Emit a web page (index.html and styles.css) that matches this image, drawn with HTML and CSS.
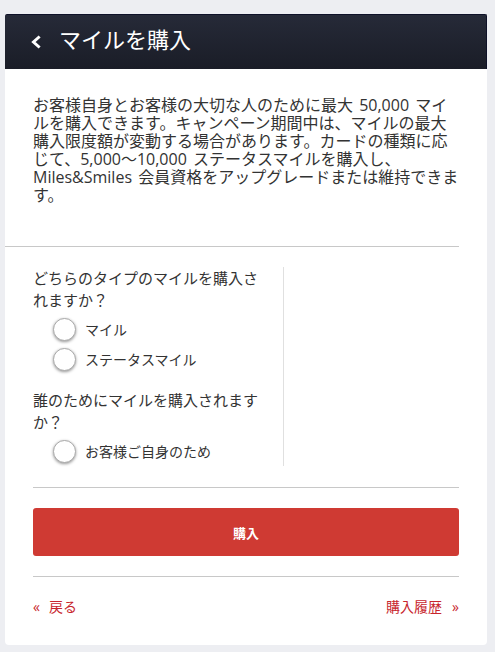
FILE: index.html
```html
<!DOCTYPE html>
<html lang="ja">
<head>
<meta charset="utf-8">
<title>マイルを購入</title>
<link rel="stylesheet" href="styles.css">
</head>
<body>
<div class="card">
  <header class="head">
    <svg class="chev" width="12" height="14" viewBox="0 0 12 14"><polyline points="8.5,2.5 3.5,7 8.5,11.5" fill="none" stroke="#fff" stroke-width="3" stroke-linecap="square" stroke-linejoin="miter"/></svg>
    <h1 class="title">マイルを購入</h1>
  </header>
  <div class="intro">
    <p class="intro-text">お客様自身とお客様の大切な人のために最大 50,000 マイルを購入できます。キャンペーン期間中は、マイルの最大購入限度額が変動する場合があります。カードの種類に応じて、5,000～10,000 ステータスマイルを購入し、Miles&amp;Smiles 会員資格をアップグレードまたは維持できます。</p>
  </div>
  <hr class="sep-wide">
  <div class="body">
    <div class="cols">
      <div class="col-left">
        <div class="group">
          <p class="question">どちらのタイプのマイルを購入されますか？</p>
          <label class="radio"><span class="dot"></span><span class="lbl">マイル</span></label>
          <label class="radio"><span class="dot"></span><span class="lbl">ステータスマイル</span></label>
        </div>
        <div class="group">
          <p class="question">誰のためにマイルを購入されますか？</p>
          <label class="radio"><span class="dot"></span><span class="lbl">お客様ご自身のため</span></label>
        </div>
      </div>
      <div class="col-right"></div>
    </div>
    <hr class="sep">
    <button class="buy">購入</button>
    <hr class="sep">
    <nav class="links">
      <a class="link" href="#"><span class="arr">«</span>戻る</a>
      <a class="link" href="#">購入履歴<span class="arr arr-r">»</span></a>
    </nav>
  </div>
</div>
</body>
</html>
```

FILE: styles.css
```css
* { box-sizing: border-box; }
html, body { margin: 0; padding: 0; }
body {
  background: #edeef2;
  font-family: "Open Sans", "Noto Sans CJK JP", sans-serif;
  color: #333;
}
.card {
  margin: 14px 8px 7px 5px;
  background: #fff;
  border-radius: 0 0 4px 4px;
  height: 631px;
}
.head {
  height: 55px;
  background: linear-gradient(#262a38, #1a1d27);
  border-top: 1px solid #0e1128;
  border-right: 1px solid #0e1128;
  border-radius: 2px 2px 0 0;
  display: flex;
  align-items: center;
  padding: 0 0 7px 25px;
}
.chev { display: block; margin-right: 17px; margin-top: 6px; }
.title {
  margin: 0;
  font-size: 22px;
  font-weight: 400;
  color: #fff;
  line-height: 26px;
}
.intro { padding: 27px 28px 0 28px; }
.intro-text {
  margin: 0;
  width: 426px;
  font-size: 16px;
  line-height: 18px;
  word-spacing: 2px;
  color: #333;
}
.sep-wide {
  margin: 42px 28px 0 0;
  border: 0;
  border-top: 1px solid #c8c8c8;
}
.body { padding: 20px 28px 0 28px; }
.cols {
  display: grid;
  grid-template-columns: 250px 1fr;
}
.col-right { border-left: 1px solid #e0e0e0; }
.group { margin-bottom: 15px; }
.group:last-child { margin-bottom: 0; }
.question {
  margin: 0 0 3px 0;
  font-size: 15px;
  line-height: 22px;
  padding-right: 12px;
}
.radio {
  display: flex;
  align-items: center;
  height: 30px;
  padding-left: 20px;
}
.dot {
  width: 23px;
  height: 23px;
  border-radius: 50%;
  border: 1px solid #aaa;
  box-shadow: 0 1px 3px rgba(0,0,0,0.4);
  background: #fff;
  flex: none;
}
.lbl {
  margin-left: 9px;
  font-size: 14px;
  color: #333;
}
.sep {
  margin: 21px 0 0 0;
  border: 0;
  border-top: 1px solid #c8c8c8;
}
.buy {
  display: block;
  width: 100%;
  height: 48px;
  margin-top: 20px;
  border: 0;
  border-radius: 3px;
  background: #cf3a33;
  color: #fff;
  font-family: "Open Sans", "Noto Sans CJK JP", sans-serif;
  font-size: 13px;
  font-weight: 700;
}
.buy + .sep { margin-top: 20px; }
.links {
  display: flex;
  justify-content: space-between;
  margin-top: 20px;
  font-size: 14px;
  line-height: 20px;
}
.link { color: #c8262e; text-decoration: none; }
.arr { margin-right: 9px; font-size: 14px; }
.arr-r { margin: 0 0 0 10px; }
```
